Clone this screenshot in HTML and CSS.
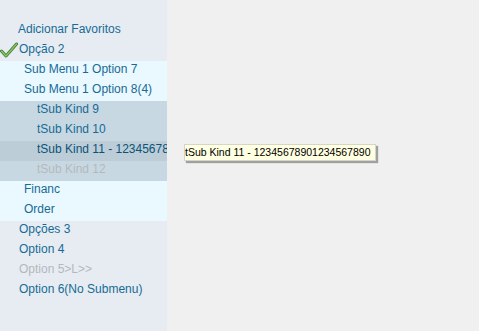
FILE: index.html
```html
<!DOCTYPE html>
<html lang="en">
  <head>
    <meta charset="UTF-8" />
    <title>Menu</title>
    <link rel="stylesheet" href="styles.css">
  </head>
  <body>
    <div class="page">
      <div class="menu">
        <div class="item first">Adicionar Favoritos</div>
        <div class="item checked">
          <svg class="check" width="18" height="16" viewBox="0 0 18 16">
            <polyline points="1.5,9 6,14 16.5,2" fill="none" stroke="#3d7a2a" stroke-width="3" stroke-linejoin="round" stroke-linecap="round"/>
            <polyline points="1.5,9 6,14 16.5,2" fill="none" stroke="#8cc46a" stroke-width="1.4" stroke-linejoin="round" stroke-linecap="round"/>
          </svg>
          Opção 2
        </div>
        <div class="sub">
          <div class="item lvl1">Sub Menu 1 Option 7</div>
          <div class="item lvl1">Sub Menu 1 Option 8(4)</div>
          <div class="subsub">
            <div class="item lvl2">tSub Kind 9</div>
            <div class="item lvl2">tSub Kind 10</div>
            <div class="item lvl2 active">tSub Kind 11 - 12345678901234567890</div>
            <div class="item lvl2 disabled">tSub Kind 12</div>
          </div>
          <div class="item lvl1">Financ</div>
          <div class="item lvl1">Order</div>
        </div>
        <div class="item">Opções 3</div>
        <div class="item">Option 4</div>
        <div class="item disabled">Option 5&gt;L&gt;&gt;</div>
        <div class="item">Option 6(No Submenu)</div>
      </div>
      <div class="canvas">
        <div class="tooltip">tSub Kind 11 - 12345678901234567890</div>
      </div>
    </div>
  </body>
</html>
```

FILE: styles.css
```css
body {
  margin: 0;
  background-color: #f0f0f0;
  font-family: "Liberation Sans", Arial, sans-serif;
}
.page {
  display: flex;
  height: 331px;
  overflow: hidden;
}
.menu {
  width: 167px;
  flex-shrink: 0;
  background-color: #e6ecf2;
  padding-top: 21px;
  overflow: hidden;
  font-size: 12px;
  color: #166b95;
}
.item {
  height: 20px;
  line-height: 16px;
  padding-left: 19px;
  white-space: nowrap;
  overflow: hidden;
  display: flex;
  align-items: flex-start;
}
.first {
  padding-left: 18px;
}
.checked {
  position: relative;
}
.check {
  position: absolute;
  left: 0;
  top: 1px;
}
.sub {
  background-color: #eaf8ff;
}
.lvl1 {
  padding-left: 24px;
}
.subsub {
  background-color: #c8d8e2;
}
.lvl2 {
  padding-left: 37px;
}
.active {
  background-color: #bccdd8;
  color: #0b5379;
}
.disabled {
  color: #b4b8bc;
}
.canvas {
  flex: 1;
  position: relative;
}
.tooltip {
  position: absolute;
  left: 17px;
  top: 144px;
  padding: 0 5px 0 0;
  background-color: #ffffe1;
  border: 1px solid #d6d6c8;
  box-shadow: 2px 2px 1px #a0a0a0;
  font-size: 10.5px;
  line-height: 15px;
  color: #000;
  white-space: nowrap;
}
```
